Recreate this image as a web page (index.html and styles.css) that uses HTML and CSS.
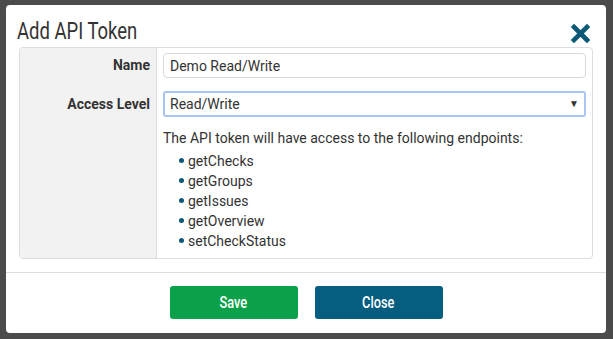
FILE: index.html
```html
<!DOCTYPE html>
<html lang="en">
<head>
    <meta charset="UTF-8">
    <title>Add API Token</title>
    <link rel="stylesheet" href="styles.css">
</head>
<body>
    <div class="modal">
        <div class="modal-header">
            <div class="modal-title">Add API Token</div>
            <button class="modal-close" title="Close">
                <svg width="19" height="19" viewBox="0 0 19 19">
                    <path d="M3 3 L16 16 M16 3 L3 16" stroke="#0b5877" stroke-width="4.6" stroke-linecap="square"/>
                </svg>
            </button>
        </div>

        <!-- Token form -->
        <div class="form-panel">
            <label class="form-label row-name" for="token-name">Name</label>
            <div class="form-field row-name">
                <input class="text-input" id="token-name" type="text" value="Demo Read/Write">
            </div>

            <label class="form-label row-access" for="token-access">Access Level</label>
            <div class="form-field row-access">
                <div class="select-wrap">
                    <select class="select-input" id="token-access">
                        <option>Read/Write</option>
                        <option>Read Only</option>
                    </select>
                    <span class="select-caret">&#9660;</span>
                </div>
            </div>

            <div class="form-label row-info"></div>
            <div class="form-field row-info">
                <p class="endpoint-intro">The API token will have access to the following endpoints:</p>
                <ul class="endpoint-list">
                    <li>getChecks</li>
                    <li>getGroups</li>
                    <li>getIssues</li>
                    <li>getOverview</li>
                    <li>setCheckStatus</li>
                </ul>
            </div>
        </div>

        <div class="modal-footer">
            <button class="btn btn-save"><span class="btn-text">Save</span></button>
            <button class="btn btn-close"><span class="btn-text">Close</span></button>
        </div>
    </div>
</body>
</html>
```

FILE: styles.css
```css
body {
    margin: 0;
    padding: 0;
    background-color: #4b4b4b;
    font-family: 'Roboto', 'Liberation Sans', sans-serif;
    font-size: 14px;
    color: #333333;
}

.modal {
    width: 600px;
    height: 328px;
    margin: 5px 0 0 6px;
    background: #ffffff;
    border-radius: 4px;
    box-sizing: border-box;
    display: flex;
    flex-direction: column;
}

/* Header */
.modal-header {
    height: 42px;
    padding: 0 16px 0 11px;
    display: flex;
    align-items: center;
    justify-content: space-between;
    box-sizing: border-box;
}

.modal-title {
    font-family: 'Roboto', sans-serif;
    font-size: 24px;
    color: #333333;
    padding-top: 10px;
    transform: scaleX(0.77);
    transform-origin: left center;
}

.modal-close {
    border: 0;
    background: none;
    padding: 0;
    margin-top: 14px;
    cursor: pointer;
    line-height: 0;
}

/* Form panel */
.form-panel {
    margin: 0 13px;
    border: 1px solid #dddddd;
    border-radius: 4px;
    display: grid;
    grid-template-columns: 137px 1fr;
    overflow: hidden;
}

.form-label {
    background: #f2f2f2;
    border-right: 1px solid #dddddd;
    font-weight: bold;
    text-align: right;
    padding-right: 6px;
}

.form-field {
    padding: 0 6px 0 6px;
}

.form-label.row-name {
    padding-top: 5px;
    line-height: 25px;
}

.form-field.row-name {
    padding-top: 5px;
}

.form-label.row-access {
    padding-top: 13px;
    line-height: 26px;
}

.form-field.row-access {
    padding-top: 13px;
}

.form-field.row-info {
    padding-top: 11px;
    padding-bottom: 7px;
}

.text-input,
.select-input {
    width: 100%;
    box-sizing: border-box;
    font-family: 'Roboto', 'Liberation Sans', sans-serif;
    font-size: 14px;
    color: #333333;
    background: #ffffff;
    border-radius: 4px;
    padding: 0 6px;
    margin: 0;
    outline: none;
}

.text-input {
    height: 25px;
    border: 1px solid #d8d8d8;
}

.select-wrap {
    position: relative;
}

.select-input {
    height: 26px;
    border: 2px solid #a9c5f5;
    border-radius: 3px;
    padding: 0 5px;
    appearance: none;
    -webkit-appearance: none;
}

.select-caret {
    position: absolute;
    right: 7px;
    top: 7px;
    font-size: 10px;
    color: #333333;
    pointer-events: none;
}

.endpoint-intro {
    margin: 0;
    line-height: 20px;
}

.endpoint-list {
    list-style: none;
    margin: 3px 0 0 0;
    padding: 0 0 0 16px;
}

.endpoint-list li {
    line-height: 20px;
    position: relative;
    padding-left: 9px;
}

.endpoint-list li::before {
    content: '';
    position: absolute;
    left: 0;
    top: 7px;
    width: 5px;
    height: 5px;
    border-radius: 50%;
    background: #0b5877;
}

/* Footer */
.modal-footer {
    margin-top: 13px;
    border-top: 1px solid #dddddd;
    padding-top: 13px;
    display: flex;
    justify-content: center;
    gap: 17px;
}

.btn {
    width: 128px;
    height: 33px;
    border: 0;
    border-radius: 3px;
    color: #ffffff;
    font-family: 'Roboto', sans-serif;
    font-weight: 500;
    font-size: 16px;
    cursor: pointer;
}

.btn-text {
    display: inline-block;
    transform: scaleX(0.8);
}

.btn-save {
    background: #0aa14a;
}

.btn-close {
    background: #055e80;
}
```
